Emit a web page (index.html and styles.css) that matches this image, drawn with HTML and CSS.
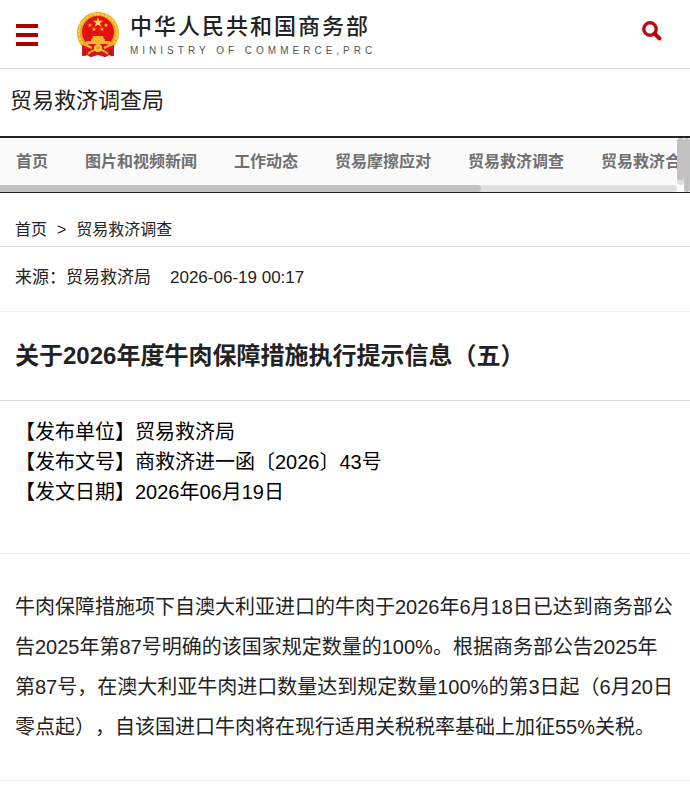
FILE: index.html
```html
<!DOCTYPE html>
<html lang="zh-CN">
<head>
    <meta charset="UTF-8">
    <meta name="viewport" content="width=device-width, initial-scale=1.0">
    <title>关于2026年度牛肉保障措施执行提示信息（五）</title>
    <link rel="stylesheet" href="styles.css">
</head>
<body>

    <!-- Top bar -->
    <header class="header">
        <button class="menu-btn" type="button" aria-label="菜单">
            <span></span><span></span><span></span>
        </button>
        <a class="logo" href="#">
            <svg class="emblem" viewBox="0 0 42 46" aria-hidden="true">
                <path d="M6 32 L5 44 L10 43 L14 45 L21 43 L28 45 L32 43 L37 44 L36 32 Z" fill="#d3161b"/>
                <circle cx="21" cy="21" r="21" fill="#e9a820"/>
                <circle cx="21" cy="21" r="19" fill="none" stroke="#f7cf45" stroke-width="2" stroke-dasharray="3 1"/>
                <circle cx="21" cy="20" r="16" fill="#e60f14"/>
                <path d="M21 5 L22.2 8.7 L26 8.7 L23 11 L24.1 14.7 L21 12.4 L17.9 14.7 L19 11 L16 8.7 L19.8 8.7 Z" fill="#ffe04a"/>
                <path d="M13 11l.6 1.4 1.6.1-1.2 1 .4 1.6-1.4-.9-1.4.9.4-1.6-1.2-1 1.6-.1zM29 11l.6 1.4 1.6.1-1.2 1 .4 1.6-1.4-.9-1.4.9.4-1.6-1.2-1 1.6-.1zM17 15l.6 1.4 1.6.1-1.2 1 .4 1.6-1.4-.9-1.4.9.4-1.6-1.2-1 1.6-.1zM25 15l.6 1.4 1.6.1-1.2 1 .4 1.6-1.4-.9-1.4.9.4-1.6-1.2-1 1.6-.1z" fill="#f9c535"/>
                <path d="M16 24h10l1 3h-12zM14 27h14v2h5v3H9v-3h5z" fill="#f3b52c"/>
                <path d="M5 33 Q21 36 37 33 L37 44 L32 43 L28 45 L21 42 L14 45 L10 43 L5 44 Z" fill="#d3161b"/>
                <path d="M6 32 L15 36 M36 32 L27 36 M11 42 Q21 33 31 42" fill="none" stroke="#f3b52c" stroke-width="2"/>
                <circle cx="21" cy="36" r="3" fill="#e9a820" stroke="#f6c63c" stroke-width="2"/>
                <path d="M8 37 L8 44 M34 37 L34 44" stroke="#a80d12" stroke-width="1"/>
            </svg>
            <span class="logo-text">
                <span class="logo-cn">中华人民共和国商务部</span>
                <span class="logo-en">MINISTRY OF COMMERCE,PRC</span>
            </span>
        </a>
        <button class="search-btn" type="button" aria-label="搜索">
            <svg viewBox="0 0 20 20" aria-hidden="true">
                <circle cx="8" cy="8" r="6.2" fill="none" stroke="#b50d10" stroke-width="3.4"/>
                <path d="M12.5 12.5 L17.5 17.5" stroke="#b50d10" stroke-width="4" stroke-linecap="round"/>
            </svg>
        </button>
    </header>

    <div class="site-name">贸易救济调查局</div>

    <!-- Channel menu -->
    <nav class="nav">
        <div class="nav-list">
            <a href="#">首页</a>
            <a href="#">图片和视频新闻</a>
            <a href="#">工作动态</a>
            <a href="#">贸易摩擦应对</a>
            <a href="#">贸易救济调查</a>
            <a href="#">贸易救济合作</a>
        </div>
        <div class="scroll-x"><div class="scroll-thumb"></div></div>
        <div class="scroll-y scroll-inner"><div class="scroll-thumb"></div></div>
        <div class="scroll-y scroll-outer"></div>
    </nav>

    <div class="crumbs">
        <a href="#">首页</a>
        <span>&gt;</span>
        <a href="#">贸易救济调查</a>
    </div>

    <main>
        <div class="source">
            <span>来源：贸易救济局</span>
            <time datetime="2026-06-19T00:17">2026-06-19 00:17</time>
        </div>

        <h1 class="title">关于2026年度牛肉保障措施执行提示信息（五）</h1>

        <div class="doc-info">
            <p>【发布单位】贸易救济局</p>
            <p>【发布文号】商救济进一函〔2026〕43号</p>
            <p>【发文日期】2026年06月19日</p>
        </div>

        <div class="content">
            <p>牛肉保障措施项下自澳大利亚进口的牛肉于2026年6月18日已达到商务部公告2025年第87号明确的该国家规定数量的100%。根据商务部公告2025年第87号，在澳大利亚牛肉进口数量达到规定数量100%的第3日起（6月20日零点起），自该国进口牛肉将在现行适用关税税率基础上加征55%关税。</p>
        </div>
    </main>

</body>
</html>
```
FILE: styles.css
```css
* {
    box-sizing: border-box;
}

body {
    margin: 0;
    background: #fff;
    color: #222;
    font-family: "Liberation Sans", "Noto Sans CJK SC", sans-serif;
    font-size: 16px;
    text-spacing-trim: space-all;
}

a {
    color: inherit;
    text-decoration: none;
}

p {
    margin: 0;
}

button {
    padding: 0;
    border: 0;
    background: none;
    cursor: pointer;
}

/* top bar */
.header {
    display: flex;
    align-items: center;
    height: 69px;
    padding: 1px 28px 0 16px;
    border-bottom: 1px solid #dcdcdc;
}

.menu-btn {
    display: flex;
    flex-direction: column;
    gap: 5px;
    width: 22px;
}

.menu-btn span {
    height: 4px;
    background: #a90000;
}

.logo {
    display: flex;
    align-items: center;
    gap: 11px;
    margin-left: 39px;
}

.emblem {
    width: 42px;
    height: 46px;
}

.logo-text {
    display: flex;
    flex-direction: column;
}

.logo-cn {
    font-size: 22px;
    font-weight: 500;
    line-height: 32px;
    letter-spacing: 2px;
}

.logo-en {
    color: #555;
    font-size: 10px;
    line-height: 16px;
    letter-spacing: 4px;
}

.search-btn {
    width: 20px;
    height: 20px;
    margin: 0 0 8px auto;
}

.search-btn svg {
    display: block;
}

.site-name {
    padding: 16px 10px 19px;
    font-size: 22px;
    line-height: 32px;
}

/* channel menu */
.nav {
    position: relative;
    border-top: 2px solid #222;
    border-bottom: 1px solid #222;
}

.nav-list {
    display: flex;
    gap: 37px;
    height: 47px;
    margin-right: 13px;
    padding-left: 16px;
    overflow: hidden;
    background: #fbfbfb;
    color: #707070;
    font-weight: bold;
    line-height: 47px;
    white-space: nowrap;
}

.scroll-x {
    height: 7px;
    margin-right: 13px;
    border-radius: 4px;
    background: #e0e0e0;
}

.scroll-x .scroll-thumb {
    width: 71%;
    height: 7px;
    border-radius: 0 4px 4px 0;
    background: #c1c1c1;
}

.scroll-y {
    position: absolute;
    top: 0;
    width: 7px;
    border-radius: 4px;
    background: #c1c1c1;
}

.scroll-inner {
    right: 6px;
    bottom: 7px;
    background: #dcdcdc;
}

.scroll-inner .scroll-thumb {
    height: 42px;
    border-radius: 4px;
    background: #c1c1c1;
}

.scroll-outer {
    right: 0;
    bottom: 0;
    width: 6px;
}

/* article */
.crumbs {
    display: flex;
    gap: 10px;
    padding: 25px 15px 4px;
    border-bottom: 1px solid #dcdcdc;
    line-height: 24px;
}

.source {
    display: flex;
    gap: 19px;
    padding: 19px 15px 21px;
    border-bottom: 1px solid #ececec;
    font-size: 17px;
    line-height: 24px;
}

.title {
    margin: 0;
    padding: 24px 15px;
    border-bottom: 1px solid #dcdcdc;
    font-size: 24px;
    line-height: 40px;
}

.doc-info {
    padding: 16px 15px 46px;
    border-bottom: 1px solid #ececec;
    color: #000;
    font-size: 20px;
    line-height: 30px;
}

.content {
    padding: 33px 15px;
    border-bottom: 1px solid #ececec;
    font-size: 20px;
    line-height: 40px;
}
```
